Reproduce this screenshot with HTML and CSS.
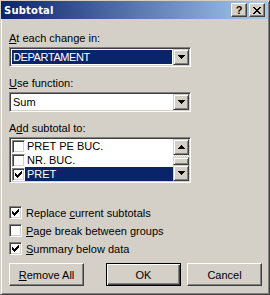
FILE: index.html
```html
<!DOCTYPE html>
<html>
<head>
<meta charset="utf-8">
<title>Subtotal</title>
<link rel="stylesheet" href="styles.css">
</head>
<body>
<div class="window">
  <div class="titlebar">
    <span class="title">Subtotal</span>
    <span class="tbtn help">?</span>
    <span class="tbtn close"><svg width="8" height="7" viewBox="0 0 8 7" shape-rendering="crispEdges"><path d="M0 0h2v1H0zM6 0h2v1H6zM1 1h2v1H1zM5 1h2v1H5zM2 2h4v1H2zM3 3h2v1H3zM2 4h4v1H2zM1 5h2v1H1zM5 5h2v1H5zM0 6h2v1H0zM6 6h2v1H6z" fill="#000"/></svg></span>
  </div>
  <div class="content">
    <div class="label first"><u>A</u>t each change in:</div>
    <div class="combo">
      <div class="field"><span class="value selected caps">DEPARTAMENT</span></div>
      <span class="dd-btn"><svg width="7" height="4" viewBox="0 0 7 4" shape-rendering="crispEdges"><path d="M0 0h7v1H0zM1 1h5v1H1zM2 2h3v1H2zM3 3h1v1H3z" fill="#000"/></svg></span>
    </div>
    <div class="label"><u>U</u>se function:</div>
    <div class="combo">
      <div class="field"><span class="value">Sum</span></div>
      <span class="dd-btn"><svg width="7" height="4" viewBox="0 0 7 4" shape-rendering="crispEdges"><path d="M0 0h7v1H0zM1 1h5v1H1zM2 2h3v1H2zM3 3h1v1H3z" fill="#000"/></svg></span>
    </div>
    <div class="label">A<u>d</u>d subtotal to:</div>
    <div class="listbox">
      <div class="items">
        <div class="item"><span class="cb"></span><span class="text">PRET PE BUC.</span></div>
        <div class="item"><span class="cb"></span><span class="text">NR. BUC.</span></div>
        <div class="item"><span class="cb"><svg width="7" height="7" viewBox="0 0 7 7" shape-rendering="crispEdges"><path d="M6 0h1v1H6zM5 1h2v1H5zM0 2h1v1H0zM4 2h3v1H4zM0 3h2v1H0zM3 3h3v1H3zM0 4h5v1H0zM1 5h3v1H1zM2 6h1v1H2z" fill="#000"/></svg></span><span class="text selected">PRET</span></div>
      </div>
      <div class="vscroll">
        <span class="sbtn"><svg width="7" height="4" viewBox="0 0 7 4" shape-rendering="crispEdges"><path d="M3 0h1v1H3zM2 1h3v1H2zM1 2h5v1H1zM0 3h7v1H0z" fill="#000"/></svg></span>
        <span class="track"><span class="thumb"></span></span>
        <span class="sbtn"><svg width="7" height="4" viewBox="0 0 7 4" shape-rendering="crispEdges"><path d="M0 0h7v1H0zM1 1h5v1H1zM2 2h3v1H2zM3 3h1v1H3z" fill="#000"/></svg></span>
      </div>
    </div>
    <div class="checks">
      <div class="check"><span class="cb"><svg width="7" height="7" viewBox="0 0 7 7" shape-rendering="crispEdges"><path d="M6 0h1v1H6zM5 1h2v1H5zM0 2h1v1H0zM4 2h3v1H4zM0 3h2v1H0zM3 3h3v1H3zM0 4h5v1H0zM1 5h3v1H1zM2 6h1v1H2z" fill="#000"/></svg></span><span>Replace <u>c</u>urrent subtotals</span></div>
      <div class="check"><span class="cb"></span><span><u>P</u>age break between groups</span></div>
      <div class="check"><span class="cb"><svg width="7" height="7" viewBox="0 0 7 7" shape-rendering="crispEdges"><path d="M6 0h1v1H6zM5 1h2v1H5zM0 2h1v1H0zM4 2h3v1H4zM0 3h2v1H0zM3 3h3v1H3zM0 4h5v1H0zM1 5h3v1H1zM2 6h1v1H2z" fill="#000"/></svg></span><span><u>S</u>ummary below data</span></div>
    </div>
    <div class="buttons">
      <div class="btn"><span><u>R</u>emove All</span></div>
      <div class="btn default ok"><span>OK</span></div>
      <div class="btn cancel"><span>Cancel</span></div>
    </div>
  </div>
</div>
</body>
</html>
```

FILE: styles.css
```css
* { box-sizing: border-box; }
html, body { margin: 0; padding: 0; }
body {
  width: 270px;
  height: 295px;
  overflow: hidden;
  background: #d4d0c8;
  font-family: "Liberation Sans", Arial, sans-serif;
  font-size: 11px;
  color: #000;
}
u { text-decoration: underline; text-underline-offset: 1px; }

.window {
  width: 270px;
  height: 295px;
  background: #d4d0c8;
  border: 1px solid;
  border-color: #d4d0c8 #404040 #404040 #d4d0c8;
  box-shadow: inset 1px 1px #fff, inset -1px -1px #808080;
  padding: 0 1px 1px 0;
}

.titlebar {
  height: 18px;
  display: flex;
  align-items: center;
  padding: 0 3px 0 3px;
  background: linear-gradient(to right, #0a246a, #a6caf0);
}
.title {
  flex: 1;
  color: #fff;
  font-family: "DejaVu Sans", Verdana, sans-serif;
  font-weight: bold;
  font-size: 10px;
  letter-spacing: 0.2px;
}
.tbtn {
  width: 16px;
  height: 14px;
  display: flex;
  align-items: center;
  justify-content: center;
  background: #d4d0c8;
  border: 1px solid;
  border-color: #fff #404040 #404040 #fff;
  box-shadow: inset -1px -1px #808080;
}
.tbtn.help {
  margin-right: 2px;
  font-weight: bold;
  font-size: 11px;
  line-height: 12px;
}

.content {
  padding: 0 0 0 8px;
}

.label {
  height: 13px;
  line-height: 13px;
  margin-top: 10px;
  margin-bottom: 2px;
  white-space: nowrap;
}
.label.first { margin-top: 13px; }

.combo, .listbox {
  width: 182px;
  background: #fff;
  border: 1px solid;
  border-color: #808080 #fff #fff #808080;
  box-shadow: inset 1px 1px #404040, inset -1px -1px #d4d0c8;
  padding: 1px;
  display: flex;
}
.combo { height: 20px; }
.field {
  flex: 1;
  padding: 1px;
}
.value {
  display: block;
  height: 14px;
  line-height: 14px;
  padding-left: 1px;
  white-space: nowrap;
}
.value.caps { letter-spacing: -0.4px; }
.selected {
  background: #0a246a;
  color: #fff;
}
.dd-btn, .sbtn {
  width: 16px;
  height: 16px;
  flex: none;
  display: flex;
  align-items: center;
  justify-content: center;
  background: #d4d0c8;
  border: 1px solid;
  border-color: #d4d0c8 #404040 #404040 #d4d0c8;
  box-shadow: inset 1px 1px #fff, inset -1px -1px #808080;
}

.listbox { height: 46px; }
.items { flex: 1; display: flex; flex-direction: column; }
.item {
  height: 14px;
  display: flex;
  align-items: flex-start;
}
.item .cb { margin: 1px 0 0 1px; }
.item .text {
  flex: 1;
  height: 14px;
  line-height: 14px;
  padding-left: 2px;
  white-space: nowrap;
}

.cb {
  width: 13px;
  height: 13px;
  flex: none;
  background: #fff;
  border: 1px solid;
  border-color: #808080 #fff #fff #808080;
  box-shadow: inset 1px 1px #404040, inset -1px -1px #d4d0c8;
  display: flex;
  align-items: center;
  justify-content: center;
}

.vscroll {
  width: 16px;
  display: flex;
  flex-direction: column;
}
.track {
  flex: 1;
  display: flex;
  flex-direction: column;
  justify-content: flex-end;
  background: repeating-conic-gradient(#d4d0c8 0 25%, #fff 0 50%) 0 0 / 2px 2px;
}
.thumb {
  height: 8px;
  background: #d4d0c8;
  border: 1px solid;
  border-color: #d4d0c8 #404040 #404040 #d4d0c8;
  box-shadow: inset 1px 1px #fff, inset -1px -1px #808080;
}

.checks { margin-top: 21px; }
.check {
  height: 18px;
  line-height: 18px;
  display: flex;
  align-items: flex-start;
  white-space: nowrap;
}
.check .cb { margin: 2px 4px 0 0; }

.buttons {
  margin-top: 5px;
  display: flex;
}
.btn {
  width: 75px;
  height: 23px;
  display: flex;
  align-items: center;
  justify-content: center;
  background: #d4d0c8;
  border: 1px solid;
  border-color: #fff #404040 #404040 #fff;
  box-shadow: inset -1px -1px #808080;
}
.btn.default {
  border: 1px solid #000;
  box-shadow: inset 1px 1px #fff, inset -1px -1px #404040, inset -2px -2px #808080;
}
.btn.ok { margin-left: 22px; }
.btn.cancel { margin-left: 6px; }
```
